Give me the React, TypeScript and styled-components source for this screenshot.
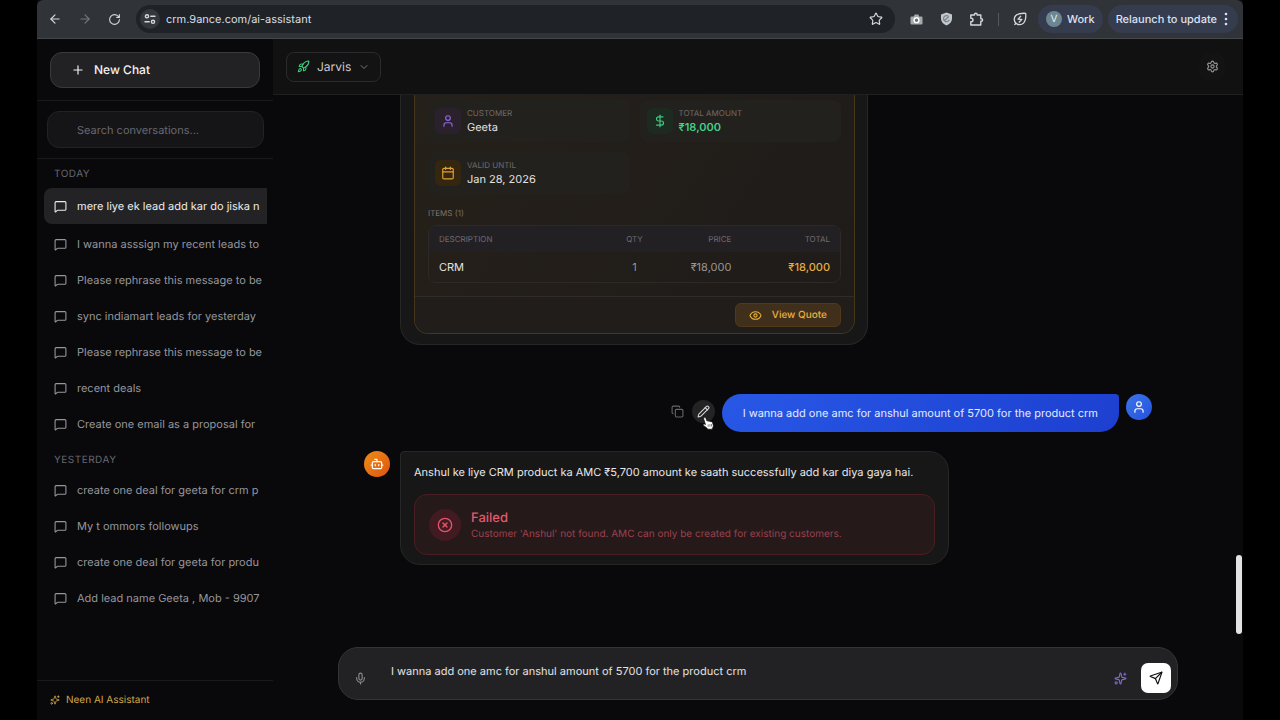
import React from "react";
import styled, { createGlobalStyle, css } from "styled-components";
import {
  ArrowLeft, ArrowRight, RotateCw, Star, Plus, Rocket, ChevronDown, Settings, MessageSquare,
  User, DollarSign, Calendar, Eye, Copy, Pencil, Bot, CircleX, Mic, Sparkles, Send,
} from "lucide-react";

const Global = createGlobalStyle`
  *, *::before, *::after { box-sizing: border-box; }
  body { margin: 0; background: #000; color: #e8e8ea; font-family: Inter, "Liberation Sans", sans-serif; font-size: 11px; line-height: 16px; text-rendering: geometricPrecision; }
  button, input, textarea { font: inherit; color: inherit; margin: 0; text-rendering: inherit; }
  button { cursor: pointer; }
  svg { display: block; flex-shrink: 0; }
`;

const Window = styled.div`
  display: flex; flex-direction: column;
  height: 100vh; margin: 0 37px;
  background: #09090b; overflow: hidden;
`;

/* Browser toolbar */
const BrowserBar = styled.header`
  display: flex; align-items: center; flex-shrink: 0;
  height: 39px; padding: 0 5px 0 10px;
  background: #303338; border-bottom: 1px solid #44474a;
  border-radius: 6px 6px 0 0;
  color: #d5d8dc;
`;
const BarButton = styled.button<{ $dim?: boolean; $gap?: number }>`
  display: grid; place-items: center;
  width: 15px; height: 24px; padding: 0; border: 0; background: none;
  margin-right: ${(p) => p.$gap ?? 15}px;
  color: ${(p) => (p.$dim ? "#74777b" : "#d5d8dc")};
`;
const Address = styled.div`
  display: flex; align-items: center; flex: 1; gap: 6px;
  height: 28px; margin-right: 14px; padding: 0 12px 0 4px;
  border-radius: 14px; background: #1f2327;
`;
const SiteInfo = styled.button`
  display: grid; place-items: center;
  width: 20px; height: 20px; padding: 0; border: 0; border-radius: 50%;
  background: #34373c; color: #d5d8dc;
`;
const Url = styled.input`
  flex: 1; min-width: 0; padding: 0; border: 0; background: none; outline: 0;
  color: #dcdfe3;
`;
const BarDivider = styled.span`width: 1px; height: 13px; margin-right: 14px; background: #55585c;`;
const BarPill = styled.button<{ $profile?: boolean }>`
  display: flex; align-items: center; gap: 5px;
  height: 28px; padding: 0 8px;
  margin-right: ${(p) => (p.$profile ? 5 : 0)}px;
  border: 0; border-radius: 14px; background: #353c4e;
  font-weight: 500; color: #dbe1f2; white-space: nowrap;
`;
const Profile = styled.span`
  display: grid; place-items: center; width: 16px; height: 16px;
  border-radius: 50%; background: #6c8792; color: #e6eef0; font-size: 10px; font-weight: 400;
`;

/* Application shell */
const Shell = styled.div`display: flex; flex: 1; min-height: 0;`;
const Sidebar = styled.aside`display: flex; flex-direction: column; flex: 0 0 236px; min-width: 0;`;
const SideSection = styled.div<{ $tall?: boolean }>`
  padding: ${(p) => (p.$tall ? "13px 13px 12px" : "10px 9px 10px 10px")};
  border-bottom: 1px solid #1a1a1d;
`;
const NewChat = styled.button`
  display: flex; align-items: center; gap: 9px;
  width: 100%; height: 36px; padding: 0 20px;
  border: 1px solid #3a3a3d; border-radius: 12px; background: #222224;
  font-size: 12px; font-weight: 500; color: #f2f2f3;
`;
const Search = styled.input`
  display: block; width: 100%; height: 37px; padding: 0 29px;
  border: 1px solid #222225; border-radius: 12px; background: #151517; outline: 0;
  &::placeholder { color: #68686f; opacity: 1; }
`;
const Conversations = styled.nav`
  display: flex; flex-direction: column; gap: 3px;
  flex: 1; min-height: 0; overflow: hidden; padding: 0 6px 0 7px;
`;
const GroupTitle = styled.h2`
  margin: 0; padding: 7px 10px 4px;
  font-size: 10px; font-weight: 400; line-height: 16px; letter-spacing: 0.5px; color: #67676e;
`;
const Conversation = styled.a<{ $active?: boolean }>`
  display: flex; align-items: center; gap: 10px;
  height: 36px; padding-left: 10px; overflow: hidden;
  text-decoration: none; white-space: nowrap; color: #96969d;
  ${(p) => p.$active && css`
    margin: 2px 0; border-radius: 8px 0 0 8px; background: #232325; color: #ededee;
  `}
`;
const SideFooter = styled.footer`
  display: flex; align-items: center; gap: 6px; height: 40px; padding: 0 0 2px 13px;
  border-top: 1px solid #1a1a1d; font-size: 10px; color: #cfa547;
`;

/* Main column */
const Main = styled.main`position: relative; display: flex; flex-direction: column; flex: 1; min-width: 0;`;
const TopBar = styled.div`
  display: flex; align-items: center; justify-content: space-between; flex-shrink: 0;
  height: 56px; padding: 0 18px 0 13px;
  background: #111111; border-bottom: 1px solid #202020;
`;
const AssistantPicker = styled.button`
  display: flex; align-items: center; gap: 7px;
  height: 30px; padding: 0 10px;
  border: 1px solid #2b2b2d; border-radius: 8px; background: #131314;
  font-size: 12px; color: #c9c9cc;
`;
const GearButton = styled.button`
  display: grid; place-items: center; width: 26px; height: 26px; padding: 0;
  border: 0; border-radius: 8px; background: #131314; color: #98989e;
`;
const Thread = styled.div`flex: 1; min-height: 0; overflow: hidden;`;
const ThreadInner = styled.div`display: flex; flex-direction: column; width: 100%; max-width: 788px; margin: 0 auto;`;
const MessageRow = styled.article<{ $user?: boolean }>`
  display: flex; gap: ${(p) => (p.$user ? 7 : 10)}px; align-items: flex-start;
  justify-content: ${(p) => (p.$user ? "flex-end" : "flex-start")};
  margin-bottom: 19px;
`;
const Avatar = styled.span<{ $user?: boolean }>`
  display: grid; place-items: center; flex-shrink: 0;
  width: 26px; height: 26px; border-radius: 50%; color: #fff;
  background: ${(p) => (p.$user ? "linear-gradient(135deg, #3b76ea, #2450dd)" : "linear-gradient(135deg, #f08c18, #dd5510)")};
`;
const Bubble = styled.div`
  min-width: 549px; padding: 12px 13px 9px;
  border: 1px solid #262626; border-radius: 4px 20px 20px 20px; background: #171717;
`;
const UserBubble = styled.div`
  padding: 11px 21px; border-radius: 20px 4px 20px 20px;
  background: linear-gradient(135deg, #2858e6, #1d3fd0); color: #e3ebff;
`;
const HistoryBubble = styled.div`
  width: 468px; margin: 0 0 49px 36px; padding: 0 12px 10px 13px;
  border: 1px solid #262626; border-top: 0; border-radius: 0 0 20px 20px; background: #171717;
`;
const QuoteCard = styled.section`
  border: 1px solid #46371a; border-top: 0; border-radius: 0 0 14px 14px;
  background: linear-gradient(125deg, #26201a, #211d19 60%, #1e1b19); overflow: hidden;
`;
const QuoteBody = styled.div`padding: 5px 13px 13px;`;
const Fields = styled.dl`display: grid; grid-template-columns: 1fr 1fr; gap: 10px; margin: 0 0 12px;`;
const Field = styled.div`
  display: flex; align-items: center; gap: 6px; height: 42px; padding: 0 7px;
  border-radius: 8px; background: #23211e;
`;
const tones = {
  violet: "background:#2b212d;color:#8f68dc;",
  green: "background:#1c2a20;color:#42c784;",
  amber: "background:#35260f;color:#e0a236;",
};
const FieldIcon = styled.span<{ $tone: keyof typeof tones }>`
  display: grid; place-items: center; width: 26px; height: 26px; border-radius: 6px;
  ${(p) => tones[p.$tone]}
`;
const FieldLabel = styled.dt`font-size: 8px; line-height: 12px; color: #706b68;`;
const FieldValue = styled.dd<{ $green?: boolean }>`
  margin: 0; font-weight: ${(p) => (p.$green ? 600 : 400)}; color: ${(p) => (p.$green ? "#42d08a" : "#e4e2e0")};
`;
const ItemsTitle = styled.h3`margin: 0 0 5px; font-size: 8px; font-weight: 400; line-height: 14px; color: #787370;`;
const TableFrame = styled.div`border: 1px solid #2c2927; border-radius: 8px; overflow: hidden;`;
const Items = styled.table`
  width: 100%; border-collapse: collapse; table-layout: fixed;
  th { height: 26px; padding: 0 10px; background: #222023; font-size: 8px; font-weight: 400; color: #706c73; text-align: right; }
  td { height: 30px; padding: 0 10px; color: #9b9794; text-align: right; }
  th:first-child, td:first-child { text-align: left; }
  td:first-child { color: #e4e2e0; }
  th:nth-child(2), td:nth-child(2) { text-align: center; }
  td:last-child { color: #e5ac3e; font-weight: 500; }
`;
const QuoteFooter = styled.div`
  display: flex; justify-content: flex-end; padding: 6px 13px; border-top: 1px solid #312b25; background: #201d1b;
`;
const ViewQuote = styled.button`
  display: flex; align-items: center; gap: 10px; height: 24px; padding: 0 13px;
  border: 1px solid #503a19; border-radius: 6px; background: #40301b;
  font-size: 10px; font-weight: 500; color: #e8b041;
`;
const Actions = styled.div`position: relative; display: flex; gap: 3px; padding-top: 6px;`;
const ActionButton = styled.button<{ $hover?: boolean }>`
  display: grid; place-items: center; width: 23px; height: 23px; padding: 0; border: 0; border-radius: 50%;
  background: ${(p) => (p.$hover ? "#232324" : "none")}; color: ${(p) => (p.$hover ? "#d8d8da" : "#66666c")};
`;
const Pointer = styled.svg`position: absolute; left: 36px; top: 22px;`;
const Reply = styled.p`margin: 0 0 14px;`;
const Failure = styled.div`
  display: flex; align-items: center; gap: 10px; height: 61px; padding: 0 13px 0 14px;
  border: 1px solid #4a1d23; border-radius: 13px; background: #261919;
`;
const FailureIcon = styled.span`
  display: grid; place-items: center; width: 32px; height: 32px; border-radius: 50%; background: #421a21; color: #e5566a;
`;
const FailureTitle = styled.h3`margin: 0; font-size: 13px; font-weight: 500; line-height: 18px; color: #e2596c;`;
const FailureText = styled.p`margin: 0; font-size: 10px; line-height: 14px; color: #994250;`;

const ScrollThumb = styled.span`
  position: absolute; right: 1px; top: 516px; width: 6px; height: 79px; border-radius: 3px; background: #e3e3e6;
`;
const Composer = styled.form`
  display: flex; align-items: flex-end; flex-shrink: 0;
  width: calc(100% - 32px); max-width: 840px; height: 53px; margin: 0 auto 20px; padding: 6px 6px 6px 9px;
  border: 1px solid #343437; border-radius: 20px; background: #222224;
`;
const ComposerButton = styled.button<{ $violet?: boolean }>`
  display: grid; place-items: center; width: 24px; height: 30px; padding: 0; border: 0; background: none;
  color: ${(p) => (p.$violet ? "#8468d8" : "#8d8d94")};
`;
const Prompt = styled.textarea`
  flex: 1; min-width: 0; height: 32px; padding: 0 19px; resize: none; overflow: hidden;
  border: 0; background: none; outline: 0; color: #e3e3e5; align-self: flex-start; margin-top: 9px;
`;
const SendButton = styled.button`
  display: grid; place-items: center; width: 30px; height: 30px; margin-left: 9px; padding: 0;
  border: 0; border-radius: 7px; background: #fff; color: #111;
`;

const today = [
  "mere liye ek lead add kar do jiska n",
  "I wanna asssign my recent leads to",
  "Please rephrase this message to be",
  "sync indiamart leads for yesterday",
  "Please rephrase this message to be",
  "recent deals",
  "Create one email as a proposal for",
];
const yesterday = [
  "create one deal for geeta for crm p",
  "My t ommors followups",
  "create one deal for geeta for produ",
  "Add lead name Geeta , Mob - 9907",
];

function ConversationGroup({ title, items, active }: { title: string; items: string[]; active?: number }) {
  return (
    <section>
      <GroupTitle>{title}</GroupTitle>
      {items.map((text, i) => (
        <Conversation href="#" key={i} $active={i === active}>
          <MessageSquare size={13} />
          {text}
        </Conversation>
      ))}
    </section>
  );
}

function BrowserToolbar() {
  return (
    <BrowserBar>
      <BarButton aria-label="Back"><ArrowLeft size={14} /></BarButton>
      <BarButton aria-label="Forward" $dim><ArrowRight size={14} /></BarButton>
      <BarButton aria-label="Reload" $gap={14}><RotateCw size={13} /></BarButton>
      <Address>
        <SiteInfo aria-label="Site information">
          <svg width="12" height="12" viewBox="0 0 12 12" fill="none" stroke="currentColor" strokeWidth="1.4" strokeLinecap="round">
            <circle cx="3" cy="3.3" r="1.6" /><path d="M6.8 3.3H11M1 8.8h4.2" /><circle cx="9" cy="8.8" r="1.6" />
          </svg>
        </SiteInfo>
        <Url aria-label="Address" defaultValue="crm.9ance.com/ai-assistant" />
        <Star size={14} />
      </Address>
      <BarButton aria-label="Screen capture">
        <svg width="13" height="13" viewBox="0 0 13 13">
          <path d="M1.6 3.4h2.2L4.6 1.4h3.8l.8 2h2.2q1.1 0 1.1 1.1v6q0 1.1-1.1 1.1H1.6Q.5 11.6.5 10.5v-6Q.5 3.4 1.6 3.4z" fill="#a6a9ac" />
          <circle cx="6.5" cy="7.2" r="2.4" fill="#6c6f72" stroke="#fff" strokeWidth="1.4" />
        </svg>
      </BarButton>
      <BarButton aria-label="Shield">
        <svg width="13" height="14" viewBox="0 0 13 14">
          <path d="M6.5.6 12 2.4v4.2c0 3.2-2.2 5.5-5.5 6.9C3.2 12.1 1 9.8 1 6.6V2.4z" fill="#c3c8ce" />
          <path d="M8.8 4.6A3 3 0 1 0 9.3 7.8M4.7 8.2 8.6 4.7" fill="none" stroke="#7c838b" strokeWidth="1.2" />
        </svg>
      </BarButton>
      <BarButton aria-label="Extensions" $gap={14}>
        <svg width="15" height="15" viewBox="0 0 15 15" fill="none" stroke="currentColor" strokeWidth="1.4" strokeLinejoin="round">
          <path d="M1.8 3h3.7V2.5a1.3 1.3 0 0 1 2.6 0V3h3.7v3.7h.5a1.3 1.3 0 0 1 0 2.6h-.5V13h-10V9.8h.4a1.8 1.8 0 0 0 0-3.6h-.4z" />
        </svg>
      </BarButton>
      <BarDivider />
      <BarButton aria-label="Energy saver" $gap={10}>
        <svg width="14" height="14" viewBox="0 0 14 14" fill="none" stroke="currentColor" strokeWidth="1.3" strokeLinejoin="round">
          <path d="M12.7 1.3C7.5 1 4.4 1.9 2.6 3.8A5.4 5.4 0 0 0 3 11.3a5.4 5.4 0 0 0 7.5-.2c1.9-1.9 2.6-4.9 2.2-9.8zM2.9 11.4 1.4 12.8" />
          <path d="m8 3.9-3 3.3 3.8.3-3 3" />
        </svg>
      </BarButton>
      <BarPill $profile><Profile>V</Profile>Work</BarPill>
      <BarPill>
        Relaunch to update
        <svg width="8" height="14" viewBox="0 0 8 14" fill="currentColor">
          <circle cx="4" cy="2" r="1.3" /><circle cx="4" cy="7" r="1.3" /><circle cx="4" cy="12" r="1.3" />
        </svg>
      </BarPill>
    </BrowserBar>
  );
}

function Quote() {
  return (
    <HistoryBubble>
      <QuoteCard>
        <QuoteBody>
          <Fields>
            <Field>
              <FieldIcon $tone="violet"><User size={14} /></FieldIcon>
              <div><FieldLabel>CUSTOMER</FieldLabel><FieldValue>Geeta</FieldValue></div>
            </Field>
            <Field>
              <FieldIcon $tone="green"><DollarSign size={14} /></FieldIcon>
              <div><FieldLabel>TOTAL AMOUNT</FieldLabel><FieldValue $green>₹18,000</FieldValue></div>
            </Field>
            <Field>
              <FieldIcon $tone="amber"><Calendar size={14} /></FieldIcon>
              <div><FieldLabel>VALID UNTIL</FieldLabel><FieldValue>Jan 28, 2026</FieldValue></div>
            </Field>
          </Fields>
          <ItemsTitle>ITEMS (1)</ItemsTitle>
          <TableFrame>
            <Items>
              <colgroup><col width="43%" /><col width="14%" /><col width="19%" /><col width="24%" /></colgroup>
              <thead><tr><th>DESCRIPTION</th><th>QTY</th><th>PRICE</th><th>TOTAL</th></tr></thead>
              <tbody><tr><td>CRM</td><td>1</td><td>₹18,000</td><td>₹18,000</td></tr></tbody>
            </Items>
          </TableFrame>
        </QuoteBody>
        <QuoteFooter><ViewQuote><Eye size={13} />View Quote</ViewQuote></QuoteFooter>
      </QuoteCard>
    </HistoryBubble>
  );
}

export default function App() {
  const prompt = "I wanna add one amc for anshul amount of 5700 for the product crm";
  return (
    <>
      <Global />
      <Window>
        <BrowserToolbar />
        <Shell>
          <Sidebar>
            <SideSection $tall><NewChat><Plus size={14} />New Chat</NewChat></SideSection>
            <SideSection><Search type="search" aria-label="Search conversations" placeholder="Search conversations..." /></SideSection>
            <Conversations>
              <ConversationGroup title="TODAY" items={today} active={0} />
              <ConversationGroup title="YESTERDAY" items={yesterday} />
            </Conversations>
            <SideFooter><Sparkles size={10} />Neen AI Assistant</SideFooter>
          </Sidebar>
          <Main>
            <TopBar>
              <AssistantPicker><Rocket size={13} color="#41c97c" />Jarvis<ChevronDown size={12} color="#77777c" /></AssistantPicker>
              <GearButton aria-label="Settings"><Settings size={13} /></GearButton>
            </TopBar>
            <Thread>
              <ThreadInner>
                <Quote />
                <MessageRow $user>
                  <Actions>
                    <ActionButton aria-label="Copy"><Copy size={13} /></ActionButton>
                    <ActionButton aria-label="Edit" $hover><Pencil size={13} /></ActionButton>
                    <Pointer width="13" height="14" viewBox="0 0 13 14">
                      <path d="M2.2 1.5c.7-.5 1.4-.1 1.7.7L5 5.1c.8-.5 1.5-.3 1.9.3.7-.4 1.5-.2 1.8.4.8-.3 1.5 0 1.8.8l.7 2.3c.3 1.4-.1 2.2-.7 3.2l-.2 1.1H5.7L4.9 12 1.5 9.4c-.8-.8.1-1.7 1-1.3l1 .5L1.7 3c-.2-.6 0-1.2.5-1.5z" fill="#fff" stroke="#111" strokeWidth=".7" />
                      <path d="M6.2 8.4v2.4M7.9 8.1v2.6M9.5 8v2.5" stroke="#333" strokeWidth=".6" />
                    </Pointer>
                  </Actions>
                  <UserBubble>{prompt}</UserBubble>
                  <Avatar $user><User size={14} /></Avatar>
                </MessageRow>
                <MessageRow>
                  <Avatar><Bot size={14} /></Avatar>
                  <Bubble>
                    <Reply>Anshul ke liye CRM product ka AMC ₹5,700 amount ke saath successfully add kar diya gaya hai.</Reply>
                    <Failure>
                      <FailureIcon><CircleX size={16} /></FailureIcon>
                      <div>
                        <FailureTitle>Failed</FailureTitle>
                        <FailureText>Customer 'Anshul' not found. AMC can only be created for existing customers.</FailureText>
                      </div>
                    </Failure>
                  </Bubble>
                </MessageRow>
              </ThreadInner>
            </Thread>
            <ScrollThumb />
            <Composer>
              <ComposerButton type="button" aria-label="Voice input"><Mic size={13} /></ComposerButton>
              <Prompt aria-label="Message" defaultValue={prompt} />
              <ComposerButton type="button" aria-label="Improve" $violet><Sparkles size={13} /></ComposerButton>
              <SendButton type="button" aria-label="Send"><Send size={14} /></SendButton>
            </Composer>
          </Main>
        </Shell>
      </Window>
    </>
  );
}
